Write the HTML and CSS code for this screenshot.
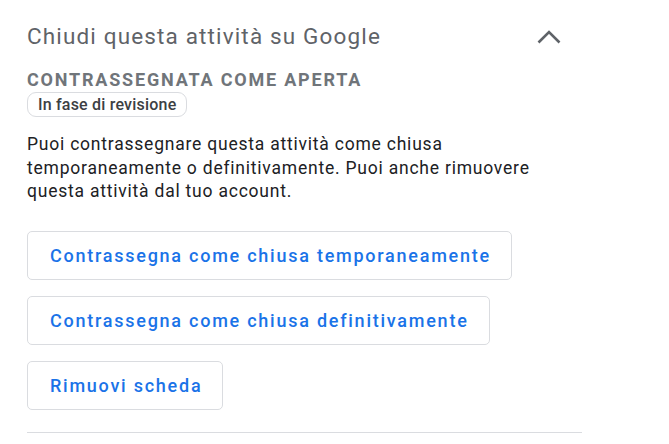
FILE: index.html
```html
<!DOCTYPE html>
<html lang="it">
<head>
<meta charset="utf-8">
<link rel="stylesheet" href="styles.css">
</head>
<body>
<section class="panel">
  <div class="header">
    <h2 class="title">Chiudi questa attività su Google</h2>
    <svg class="chevron" width="26" height="16" viewBox="0 0 26 16"><polyline points="2.5,13.5 13,3 23.5,13.5" fill="none" stroke="#5f6368" stroke-width="2.6"/></svg>
  </div>
  <div class="status">CONTRASSEGNATA COME APERTA</div>
  <span class="chip">In fase di revisione</span>
  <p class="desc">Puoi contrassegnare questa attività come chiusa temporaneamente o definitivamente. Puoi anche rimuovere questa attività dal tuo account.</p>
  <div class="actions">
    <button class="btn">Contrassegna come chiusa temporaneamente</button>
    <button class="btn">Contrassegna come chiusa definitivamente</button>
    <button class="btn">Rimuovi scheda</button>
  </div>
  <hr class="divider">
</section>
</body>
</html>
```
FILE: styles.css
```css
html, body { margin: 0; padding: 0; background: #fff; }
body { font-family: Roboto, "Noto Sans", sans-serif; }
.panel { width: 555px; padding: 18px 0 0 27px; }
.header { display: flex; align-items: center; justify-content: space-between; height: 36px; padding-right: 20px; }
.title { margin: 0; font-weight: 400; font-size: 22.5px; color: #5f6368; letter-spacing: 1.15px; }
.chevron { display: block; margin-top: 2px; }
.status { margin-top: 15px; font-size: 18px; font-weight: 700; color: #70757a; letter-spacing: 1.8px; line-height: 22px; }
.chip { display: inline-block; margin-top: 1px; border: 1px solid #dadce0; border-radius: 9px; padding: 0 10px; font-size: 16px; font-weight: 500; color: #3c4043; line-height: 23px; letter-spacing: 0.2px; }
.desc { margin: 16px 0 0; width: 520px; font-size: 17.5px; line-height: 23.5px; color: #202124; letter-spacing: 0.78px; }
.actions { display: flex; flex-direction: column; align-items: flex-start; gap: 16px; margin-top: 27px; }
.btn { font-family: Roboto, sans-serif; font-size: 18px; font-weight: 500; color: #1a73e8; background: #fff; border: 1px solid #dadce0; border-radius: 5px; height: 49px; padding: 0 20px 0 22px; letter-spacing: 1.75px; }
.divider { margin: 22px 0 0; border: 0; border-top: 1px solid #dadce0; }
```
